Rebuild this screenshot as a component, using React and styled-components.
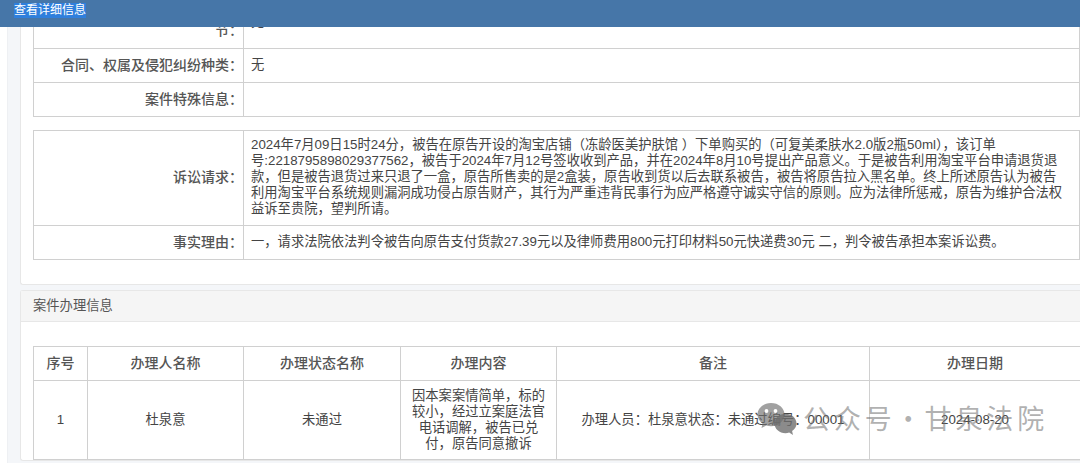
import React from "react";
import styled, { createGlobalStyle } from "styled-components";

const GlobalStyle = createGlobalStyle`
    html, body {
        margin: 0;
        padding: 0;
        height: 100%;
        overflow: hidden;
        background: #fff;
    }
    * {
        box-sizing: border-box;
    }
`;

const Page = styled.div`
    position: relative;
    width: 1080px;
    height: 463px;
    overflow: hidden;
    padding-left: 7px;
    background: #fff;
    color: #555;
    font-family: "Liberation Sans", "Noto Sans CJK SC", sans-serif;
`;

const TopBar = styled.div`
    position: absolute;
    top: 0;
    left: 0;
    z-index: 2;
    width: 100%;
    height: 27px;
    padding: 3px 0 0 14px;
    background: #4676a8;
    font-size: 12px;
    line-height: 15px;
`;

const Selected = styled.span`
    display: inline-block;
    background: #2f7fdc;
    color: #fff;
`;

const Gutter = styled.div`
    height: 100%;
    padding-left: 12px;
    background: #f4f6f9;
    border-left: 1px solid #eef0f3;
`;

const Panel = styled.section`
    background: #fff;
    border: 1px solid #e7e7e7;
    border-right: 0;
    border-radius: 3px 0 0 3px;
    margin-bottom: 5px;
`;

const TopPanel = styled(Panel)`
    height: 285px;
    border-top: 0;
    padding-left: 12px;
`;

const PanelHead = styled.div`
    height: 31px;
    padding-left: 12px;
    background: #f5f5f5;
    border-bottom: 1px solid #e7e7e7;
    font-size: 13.3px;
    line-height: 30px;
    color: #555;
`;

const PanelBody = styled.div`
    padding: 24px 0 0 12px;
`;

const Table = styled.table`
    width: 1047px;
    border-collapse: collapse;
    table-layout: fixed;
    margin-bottom: ${(p) => p.$gap || 0}px;
    td, th {
        border: 1px solid #d0d0d0;
        font-size: 13.3px;
        line-height: 16px;
    }
`;

const Label = styled.td`
    width: 210px;
    height: ${(p) => p.$h}px;
    padding: ${(p) => p.$top || 0}px 0 2px 0;
    text-align: right;
    font-weight: 500;
    font-size: 14px !important;
    color: #555;
`;

const Value = styled.td`
    padding: 6px 15px ${(p) => p.$bottom || 8}px 7px;
    color: #444;
    overflow: hidden;
`;

const HeadCell = styled.th`
    width: ${(p) => p.$w}px;
    height: 34px;
    padding: 0 0 2px;
    text-align: center;
    font-weight: 500;
    font-size: 14px !important;
    color: #555;
`;

const Cell = styled.td`
    height: 79px;
    padding: 0 8px;
    text-align: center;
    color: #444;
`;

const Watermark = styled.div`
    position: absolute;
    left: 757px;
    top: 398px;
    z-index: 1;
    display: flex;
    align-items: center;
    gap: 6px;
    color: rgba(110, 110, 110, 0.55);
    font-family: "Noto Sans CJK SC", sans-serif;
    font-size: 27px;
    letter-spacing: 3.9px;
    word-spacing: -11px;
    line-height: 40px;
    white-space: nowrap;
    pointer-events: none;
`;

function WeChatMark() {
    return (
        <svg width="40" height="36" viewBox="0 0 40 36">
            <path
                fill="rgba(110,110,110,.65)"
                d="M14 3C6.500 3 .500 8.200.500 14.500c0 3.700 2 6.900 5 9L4.500 28l4.800-2.500c1.500.400 3.100.700 4.700.700 7.500 0 13.500-5.100 13.500-11.700S21.500 3 14 3z"
            />
            <path
                fill="rgba(110,110,110,.8)"
                d="M39.500 23.500c0-5.400-4.900-9.700-11-9.700s-11 4.300-11 9.700 4.900 9.700 11 9.700c1.300 0 2.500-.200 3.700-.600l3.800 2.400-.900-4c2.700-1.800 4.400-4.500 4.400-7.500z"
            />
            <circle cx="9.500" cy="11" r="1.900" fill="#fff" />
            <circle cx="18.500" cy="11" r="1.900" fill="#fff" />
        </svg>
    );
}

const claim =
    "2024年7月09日15时24分，被告在原告开设的淘宝店铺（冻龄医美护肤馆 ）下单购买的（可复美柔肤水2.0版2瓶50ml），该订单号:2218795898029377562，被告于2024年7月12号签收收到产品，并在2024年8月10号提出产品意义。于是被告利用淘宝平台申请退货退款，但是被告退货过来只退了一盒，原告所售卖的是2盒装，原告收到货以后去联系被告，被告将原告拉入黑名单。终上所述原告认为被告利用淘宝平台系统规则漏洞成功侵占原告财产，其行为严重违背民事行为应严格遵守诚实守信的原则。应为法律所惩戒，原告为维护合法权益诉至贵院，望判所请。";

const reason =
    "一，请求法院依法判令被告向原告支付货款27.39元以及律师费用800元打印材料50元快递费30元 二，判令被告承担本案诉讼费。";

const columns = [
    ["序号", 54],
    ["办理人名称", 156],
    ["办理状态名称", 157],
    ["办理内容", 156],
    ["备注", 313],
    ["办理日期", 211],
];

export default function App() {
    return (
        <Page>
            <GlobalStyle />
            <TopBar>
                <Selected>查看详细信息</Selected>
            </TopBar>
            <Gutter>
                <TopPanel>
                    <Table $gap={13}>
                        <tbody>
                            <tr>
                                <Label $h={48} $top={12}>节：</Label>
                                <Value $bottom={12}>无</Value>
                            </tr>
                            <tr>
                                <Label $h={34}>合同、权属及侵犯纠纷种类：</Label>
                                <Value>无</Value>
                            </tr>
                            <tr>
                                <Label $h={34}>案件特殊信息：</Label>
                                <Value />
                            </tr>
                        </tbody>
                    </Table>
                    <Table>
                        <tbody>
                            <tr>
                                <Label $h={95}>诉讼请求：</Label>
                                <Value>{claim}</Value>
                            </tr>
                            <tr>
                                <Label $h={34}>事实理由：</Label>
                                <Value>{reason}</Value>
                            </tr>
                        </tbody>
                    </Table>
                </TopPanel>
                <Panel>
                    <PanelHead>案件办理信息</PanelHead>
                    <PanelBody>
                        <Table>
                            <thead>
                                <tr>
                                    {columns.map(([title, w]) => (
                                        <HeadCell key={title} $w={w}>
                                            {title}
                                        </HeadCell>
                                    ))}
                                </tr>
                            </thead>
                            <tbody>
                                <tr>
                                    <Cell>1</Cell>
                                    <Cell>杜泉意</Cell>
                                    <Cell>未通过</Cell>
                                    <Cell>因本案案情简单，标的较小，经过立案庭法官电话调解，被告已兑付，原告同意撤诉</Cell>
                                    <Cell>办理人员：杜泉意状态：未通过编号：00001</Cell>
                                    <Cell>2024-08-20</Cell>
                                </tr>
                            </tbody>
                        </Table>
                    </PanelBody>
                </Panel>
            </Gutter>
            <Watermark>
                <WeChatMark />
                公众号 · 甘泉法院
            </Watermark>
        </Page>
    );
}
